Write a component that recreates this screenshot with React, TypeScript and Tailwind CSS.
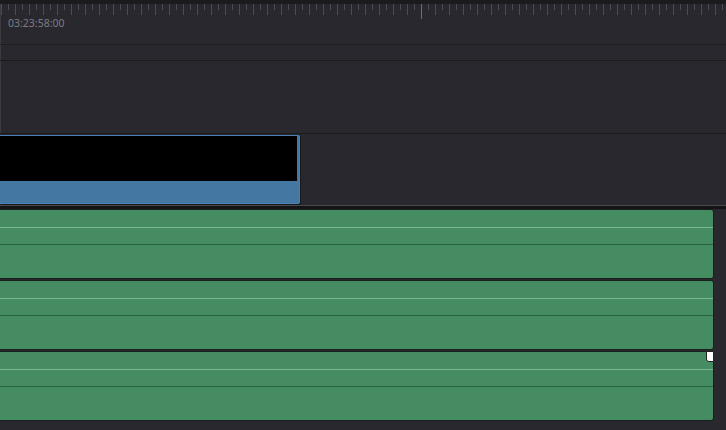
const ticks = Array.from({ length: 104 }, (_, i) => i * 7)

const AudioClip = ({ marker }: { marker?: boolean }) => {
    return (
        <div className="relative h-[71px]">
            <div className="flex flex-col w-[714px] h-[70px] border border-l-0 border-[#18201b] rounded-r-[3px] bg-[#458c63] overflow-hidden">
                <div className="h-[17px]"></div>
                <div className="h-px bg-[#7db592]"></div>
                <div className="h-[16px]"></div>
                <div className="h-px bg-[#2d6143]"></div>
            </div>
            {marker ? (
                <div className="absolute left-[706px] top-0 w-[8px] h-[11px] bg-white border border-[#222] rounded-b-[3px] rounded-br-[1px]"></div>
            ) : null}
        </div>
    )
}

const App = () => {
    return (
        <main className="w-[726px] h-[430px] overflow-hidden bg-[#28282e] flex flex-col" style={{ fontFamily: '"Noto Sans", sans-serif' }}>
            <div className="h-[4px] bg-[#1b1b1e]"></div>

            {/* ruler */}
            <div className="relative h-[40px] border-l border-[#3a3a40]">
                <svg className="absolute left-0 top-0" width="726" height="20">
                    {ticks.map(x => (
                        <line
                            key={x}
                            x1={x + 0.5}
                            x2={x + 0.5}
                            y1={0}
                            y2={x % 14 === 0 ? 11 : 6}
                            stroke="#4c4c54"
                            strokeWidth="1"
                        />
                    ))}
                    <line x1={420.5} x2={420.5} y1={0} y2={15} stroke="#6b6f79" strokeWidth="1" />
                </svg>
                <div className="absolute left-[7px] top-[14px] text-[10.5px] leading-none text-[#7c7c84]">03:23:58:00</div>
            </div>
            <div className="h-px bg-[#1e1e21]"></div>

            <div className="h-[15px] border-l border-[#3a3a40]"></div>
            <div className="h-px bg-[#1c1c1f]"></div>
            <div className="h-[72px] border-l border-[#3a3a40]"></div>
            <div className="h-px bg-[#1c1c1f]"></div>

            {/* video track */}
            <div className="h-[71px] pt-px">
                <div className="flex flex-col w-[300px] h-[69px] border border-l-0 border-[#4a80b4] rounded-r-[2px] bg-[#4577a3] overflow-hidden shadow-[1px_1px_0_#18181b]">
                    <div className="h-[45px] bg-black mr-[2px]"></div>
                </div>
            </div>
            <div className="h-px bg-[#48484d]"></div>
            <div className="h-[3px] bg-[#141416]"></div>

            {/* audio tracks */}
            <AudioClip />
            <AudioClip />
            <AudioClip marker />
        </main>
    )
}

export default App
